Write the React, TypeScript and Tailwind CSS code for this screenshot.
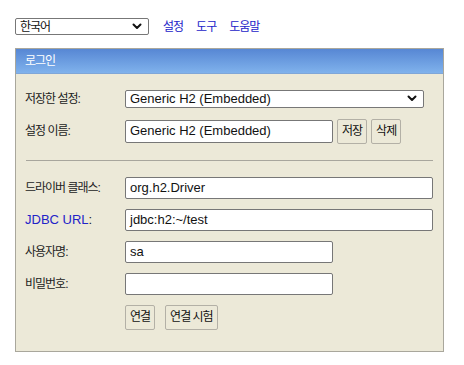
import type { ReactNode } from 'react';

const Ko = ({ children }: { children: ReactNode }) => (
  <span className="text-[12px] tracking-[-1px]">{children}</span>
);

function Chevron() {
  return (
    <svg width="10" height="7" viewBox="0 0 10 7" className="shrink-0">
      <path d="M1.5 1.5l3.5 3.5 3.5-3.5" fill="none" stroke="#111" strokeWidth="2" strokeLinecap="round" strokeLinejoin="round" />
    </svg>
  );
}

function FakeSelect({ value, className, ko }: { value: string; className: string; ko?: boolean }) {
  return (
    <div className={`flex items-center justify-between bg-white border border-[#777] rounded-[2px] pl-[4px] pr-[6px] ${className}`}>
      <span className="leading-none">{ko ? <Ko>{value}</Ko> : value}</span>
      <Chevron />
    </div>
  );
}

function Field({ value = '', wide }: { value?: string; wide?: boolean }) {
  return (
    <div className={`h-[22px] flex items-center bg-white border border-[#777] rounded-[2px] px-[4px] ${wide ? 'w-[308px]' : 'w-[208px]'}`}>
      {value}
    </div>
  );
}

function Btn({ children }: { children: ReactNode }) {
  return (
    <div className="h-[25px] flex items-center px-[4px] bg-[#ece9d8] border border-[#b3b0a6] rounded-[2px] text-[#111]">
      <Ko>{children}</Ko>
    </div>
  );
}

function Row({ label, children }: { label: ReactNode; children: ReactNode }) {
  return (
    <div className="flex items-center">
      <div className="w-[100px] shrink-0 text-[#222]">{label}</div>
      {children}
    </div>
  );
}

export default function App() {
  return (
    <div className="min-h-[365px] bg-white pl-[15px] pt-[18px] text-[13px] text-[#111] font-['Liberation_Sans','Noto_Sans_CJK_KR',sans-serif]">
      {/* top bar */}
      <div className="flex items-center h-[17px]">
        <FakeSelect value="한국어" ko className="w-[134px] h-[17px] rounded-[1px]" />
        <div className="flex gap-[13px] ml-[14px] text-[#2323c8]">
          <Ko>설정</Ko>
          <Ko>도구</Ko>
          <Ko>도움말</Ko>
        </div>
      </div>

      {/* login panel */}
      <div className="mt-[13px] w-[429px] bg-[#ece9d8] border border-[#a9a79c]">
        <div className="h-[25px] flex items-center pl-[9px] text-white bg-gradient-to-b from-[#5787d4] to-[#80b2ec] border-b border-[#7fa6d8]">
          <Ko>로그인</Ko>
        </div>

        <div className="pl-[9px] pr-[10px] pt-[15px] pb-[21px]">
          <Row label={<Ko>저장한 설정:</Ko>}>
            <FakeSelect value="Generic H2 (Embedded)" className="w-[299px] h-[18px]" />
          </Row>

          <div className="mt-[10px]">
            <Row label={<Ko>설정 이름:</Ko>}>
              <div className="flex items-center gap-[4px]">
                <div className="h-[23px] w-[208px] flex items-center bg-white border border-[#777] rounded-[2px] px-[4px]">
                  Generic H2 (Embedded)
                </div>
                <Btn>저장</Btn>
                <Btn>삭제</Btn>
              </div>
            </Row>
          </div>

          <div className="mt-[16px] ml-[1px] w-[407px] h-px bg-[#a8a69d]" />

          <div className="mt-[16px] flex flex-col gap-[10px]">
            <Row label={<Ko>드라이버 클래스:</Ko>}>
              <Field value="org.h2.Driver" wide />
            </Row>
            <Row label={<span><span className="text-[#2323c8]">JDBC URL</span>:</span>}>
              <Field value="jdbc:h2:~/test" wide />
            </Row>
            <Row label={<Ko>사용자명:</Ko>}>
              <Field value="sa" />
            </Row>
            <Row label={<Ko>비밀번호:</Ko>}>
              <Field />
            </Row>
            <div className="flex pl-[100px] gap-[10px]">
              <Btn>연결</Btn>
              <Btn>연결 시험</Btn>
            </div>
          </div>
        </div>
      </div>
    </div>
  );
}
